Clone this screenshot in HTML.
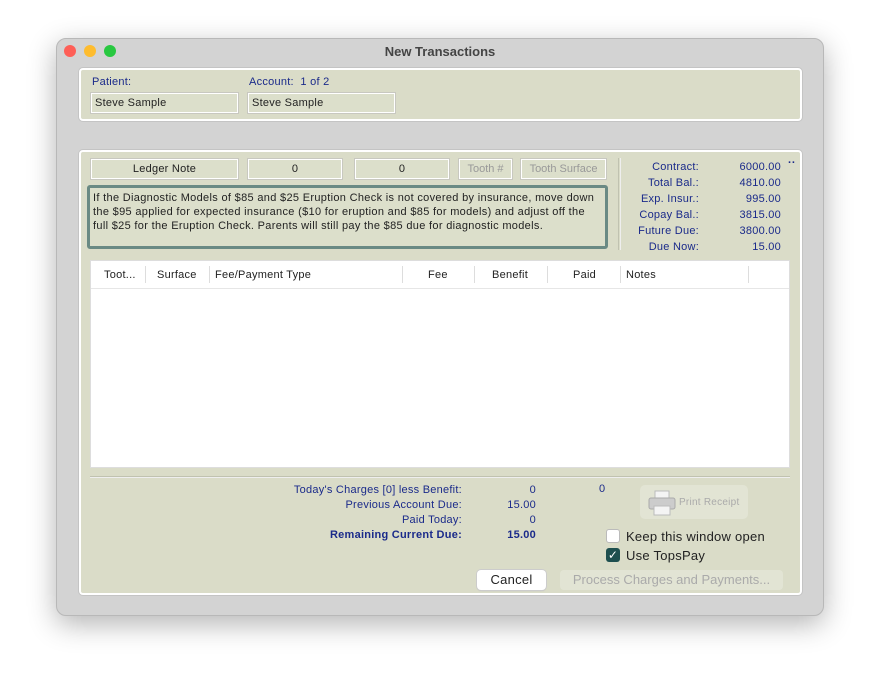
<!DOCTYPE html>
<html><head><style>
*{box-sizing:border-box;margin:0;padding:0}
body{width:880px;height:691px;background:#fff;font-family:"Liberation Sans",sans-serif;font-size:11px;position:relative;overflow:hidden;letter-spacing:0.25px}
.a{position:absolute}
.win{left:56px;top:38px;width:768px;height:578px;background:#d3d3d3;border-radius:10px;box-shadow:0 8px 28px rgba(0,0,0,.3);border:1px solid #b8b8b8}
.panel{background:#dadcc8;border:2px solid #fff;border-radius:4px;box-shadow:0 0 0 1px #c4c4c4}
.fld{background:#dcdfcb;border:1px solid #fff;box-shadow:0 0 0 1px #c8c8c0;color:#222;font-size:11px;line-height:18px}
.blue{color:#1a2a8a}
.r{text-align:right}
.c{text-align:center}
</style></head><body>
<div class="a win"></div>
<div class="a" style="left:64px;top:45px;width:12px;height:12px;border-radius:50%;background:#fe5f57"></div>
<div class="a" style="left:84px;top:45px;width:12px;height:12px;border-radius:50%;background:#febc2e"></div>
<div class="a" style="left:104px;top:45px;width:12px;height:12px;border-radius:50%;background:#28c840"></div>
<div class="a" style="left:56px;top:44px;width:768px;text-align:center;font-weight:bold;font-size:13px;color:#444;letter-spacing:0">New Transactions</div>

<div class="a panel" style="left:79px;top:68px;width:723px;height:53px"></div>
<div class="a blue" style="left:92px;top:76px">Patient:</div>
<div class="a blue" style="left:249px;top:76px">Account:&nbsp; 1 of 2</div>
<div class="a fld" style="left:91px;top:93px;width:147px;height:20px;padding-left:3px">Steve Sample</div>
<div class="a fld" style="left:248px;top:93px;width:147px;height:20px;padding-left:3px">Steve Sample</div>

<div class="a panel" style="left:79px;top:150px;width:723px;height:445px"></div>
<div class="a fld c" style="left:91px;top:159px;width:147px;height:20px">Ledger Note</div>
<div class="a fld c" style="left:248px;top:159px;width:94px;height:20px">0</div>
<div class="a fld c" style="left:355px;top:159px;width:94px;height:20px">0</div>
<div class="a fld c" style="left:459px;top:159px;width:53px;height:20px;color:#999;letter-spacing:0">Tooth #</div>
<div class="a fld c" style="left:521px;top:159px;width:85px;height:20px;color:#999;letter-spacing:0">Tooth Surface</div>
<div class="a" style="left:87px;top:185px;width:521px;height:64px;border:3px solid #6a8a84;border-radius:3px;background:#dcdfcb;padding:3px 3px;line-height:14px;color:#222;font-size:11px;letter-spacing:0.32px">If the Diagnostic Models of $85 and $25 Eruption Check is not covered by insurance, move down the $95 applied for expected insurance ($10 for eruption and $85 for models) and adjust off the full $25 for the Eruption Check. Parents will still pay the $85 due for diagnostic models.</div>
<div class="a" style="left:618px;top:158px;width:1px;height:92px;background:#c0c2b0"></div>
<div class="a" style="left:620px;top:158px;width:1px;height:92px;background:#eee"></div>
<div class="a blue r" style="left:610px;top:159px;width:89px;line-height:16px">Contract:<br>Total Bal.:<br>Exp. Insur.:<br>Copay Bal.:<br>Future Due:<br>Due Now:</div>
<div class="a blue r" style="left:710px;top:159px;width:71px;line-height:16px">6000.00<br>4810.00<br>995.00<br>3815.00<br>3800.00<br>15.00</div>
<div class="a blue" style="left:788px;top:157px;font-weight:bold">··</div>

<div class="a" style="left:90px;top:260px;width:700px;height:208px;background:#fff;border:1px solid #ddd"></div>
<div class="a" style="left:91px;top:288px;width:698px;height:1px;background:#e6e6e6"></div>
<div class="a" style="left:104px;top:269px;color:#222">Toot...</div>
<div class="a" style="left:157px;top:269px;color:#222">Surface</div>
<div class="a" style="left:215px;top:269px;color:#222">Fee/Payment Type</div>
<div class="a" style="left:428px;top:269px;color:#222">Fee</div>
<div class="a" style="left:492px;top:269px;color:#222">Benefit</div>
<div class="a" style="left:573px;top:269px;color:#222">Paid</div>
<div class="a" style="left:626px;top:269px;color:#222">Notes</div>
<div class="a" style="left:145px;top:266px;width:1px;height:17px;background:#ddd"></div>
<div class="a" style="left:209px;top:266px;width:1px;height:17px;background:#ddd"></div>
<div class="a" style="left:402px;top:266px;width:1px;height:17px;background:#ddd"></div>
<div class="a" style="left:474px;top:266px;width:1px;height:17px;background:#ddd"></div>
<div class="a" style="left:547px;top:266px;width:1px;height:17px;background:#ddd"></div>
<div class="a" style="left:620px;top:266px;width:1px;height:17px;background:#ddd"></div>
<div class="a" style="left:748px;top:266px;width:1px;height:17px;background:#ddd"></div>

<div class="a" style="left:90px;top:476px;width:700px;height:1px;background:#c0c2b0"></div>
<div class="a" style="left:90px;top:477px;width:700px;height:1px;background:#eee"></div>
<div class="a blue r" style="left:240px;top:483px;width:222px;line-height:15px">Today's Charges [0] less Benefit:<br>Previous Account Due:<br>Paid Today:<br><b>Remaining Current Due:</b></div>
<div class="a blue r" style="left:470px;top:483px;width:66px;line-height:15px">0<br>15.00<br>0<br><b>15.00</b></div>
<div class="a blue" style="left:599px;top:483px">0</div>
<div class="a" style="left:640px;top:485px;width:108px;height:34px;background:#e2e4d4;border-radius:5px"></div>
<div class="a" style="left:648px;top:490px;width:28px;height:24px">
<svg width="28" height="26"><rect x="7" y="1" width="14" height="8" fill="#f4f4f4" stroke="#bbb"/><rect x="1" y="8" width="26" height="11" rx="2" fill="#ccc" stroke="#aaa"/><rect x="6" y="16" width="16" height="9" fill="#f4f4f4" stroke="#bbb"/></svg></div>
<div class="a" style="left:679px;top:497px;color:#aaa;font-size:10px">Print Receipt</div>
<div class="a" style="left:606px;top:529px;width:14px;height:14px;background:#fff;border:1px solid #bbb;border-radius:3px"></div>
<div class="a" style="left:626px;top:529px;font-size:13px;color:#222">Keep this window open</div>
<div class="a" style="left:606px;top:548px;width:14px;height:14px;background:#1e4f4f;border-radius:3px;color:#fff;font-size:12px;line-height:14px;text-align:center">✓</div>
<div class="a" style="left:626px;top:548px;font-size:13px;color:#222">Use TopsPay</div>
<div class="a c" style="left:477px;top:570px;width:69px;height:20px;background:#fff;border-radius:4px;box-shadow:0 0 0 1px #ccc,0 1px 1px #bbb;font-size:13px;line-height:20px;color:#222">Cancel</div>
<div class="a c" style="left:560px;top:570px;width:223px;height:20px;background:#e2e4d4;border-radius:4px;font-size:13px;line-height:20px;color:#aaa;letter-spacing:0">Process Charges and Payments...</div>
</body></html>
